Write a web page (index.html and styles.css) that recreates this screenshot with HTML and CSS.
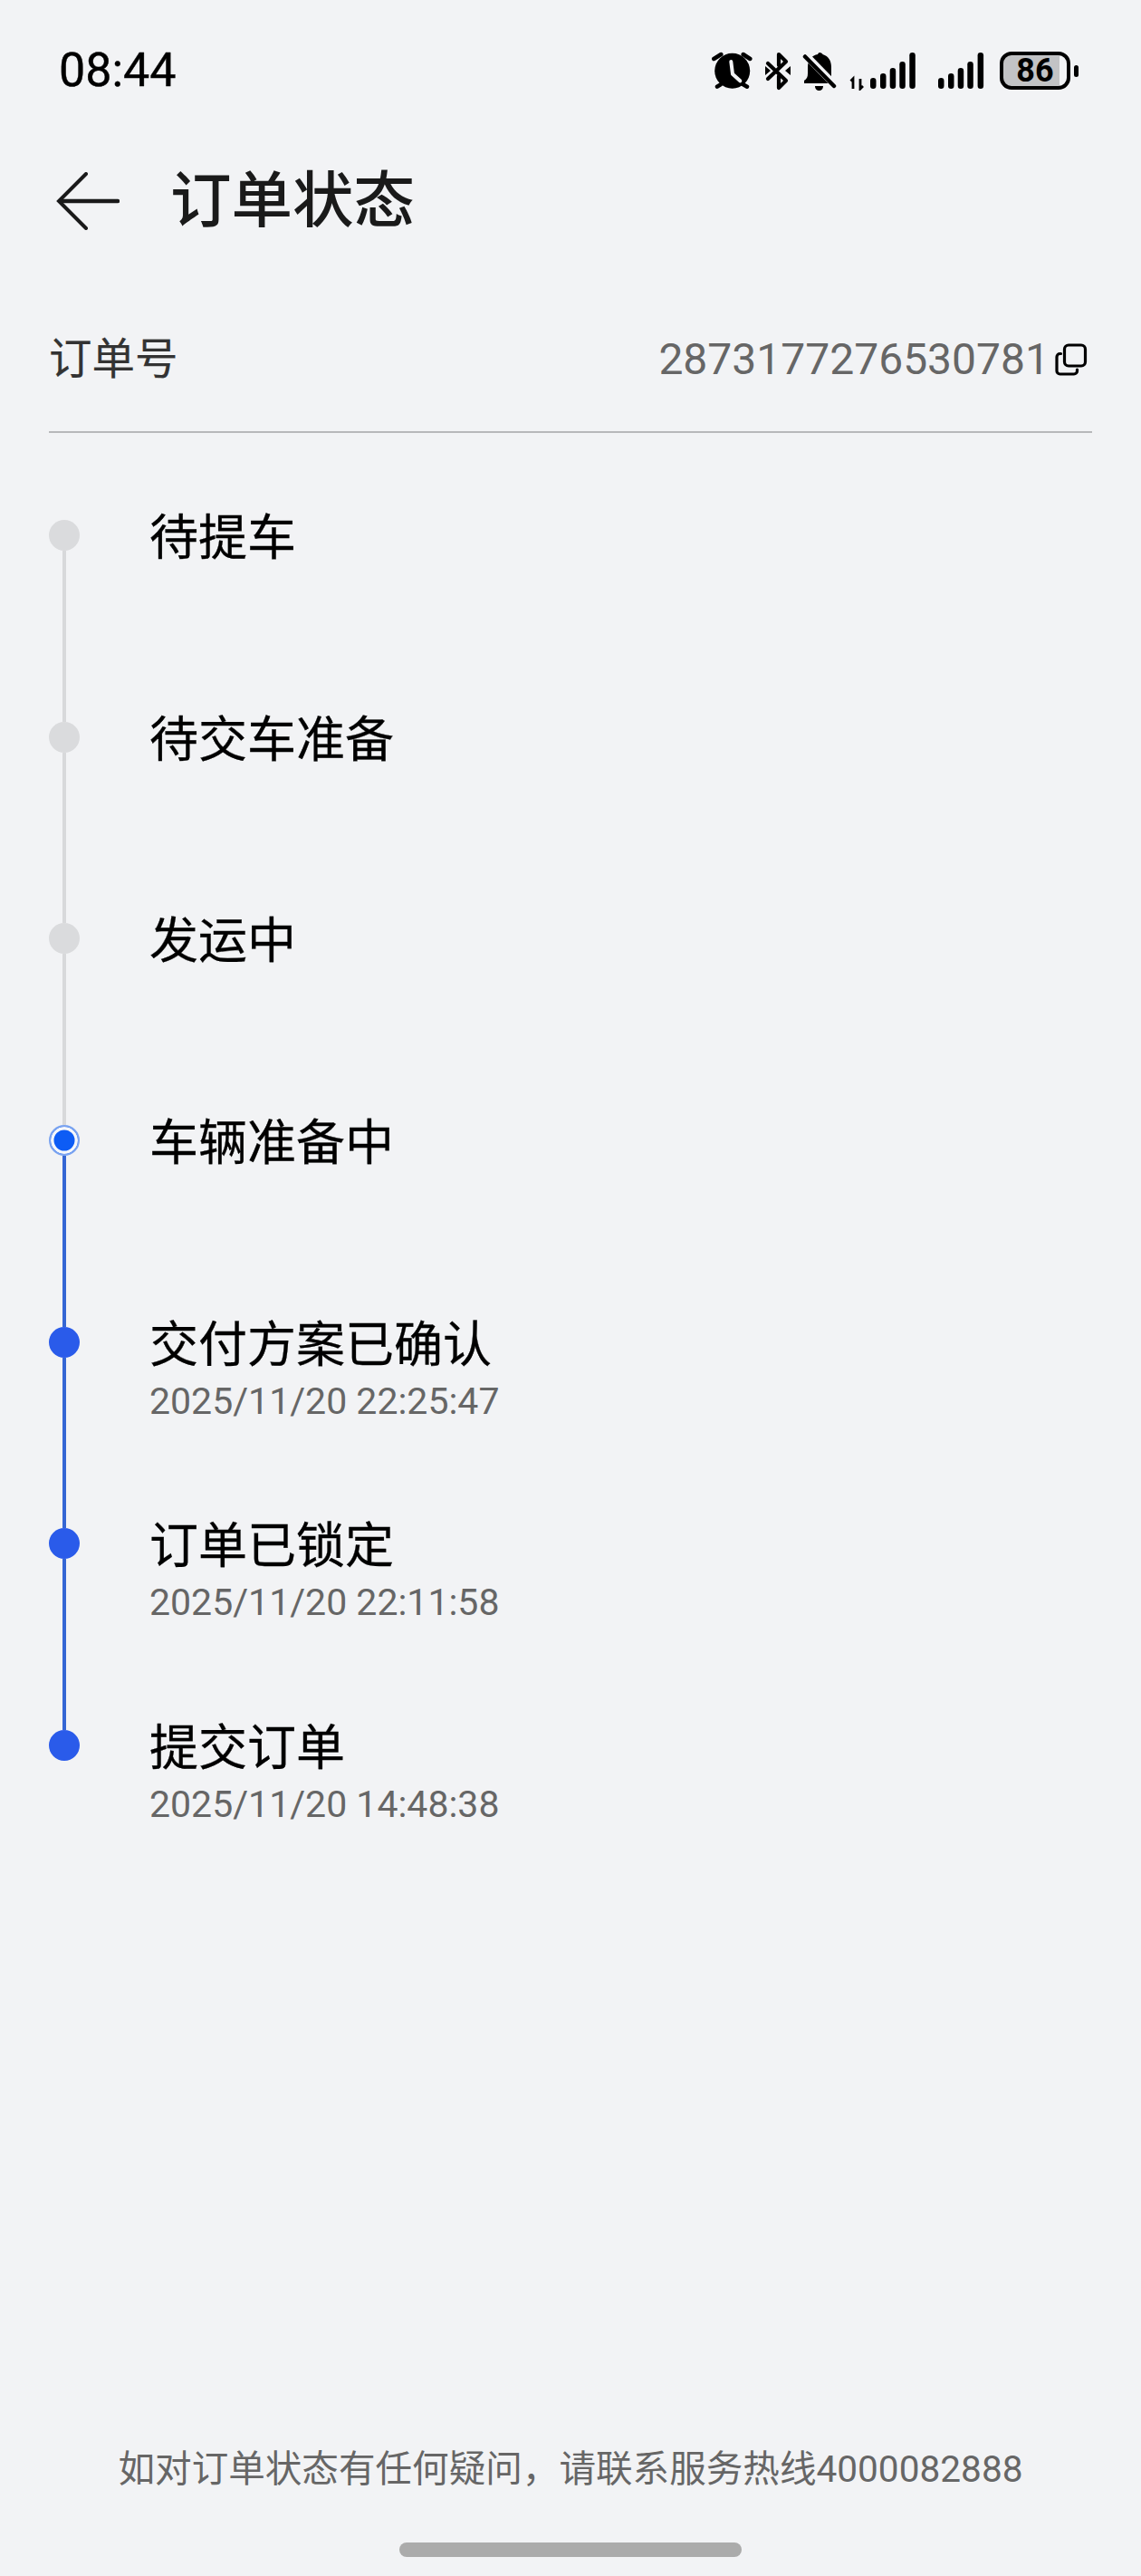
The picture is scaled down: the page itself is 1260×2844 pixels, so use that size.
FILE: index.html
```html
<!DOCTYPE html>
<html lang="zh-CN">
<head>
<meta charset="utf-8">
<title>订单状态</title>
<link rel="stylesheet" href="styles.css">
</head>
<body>
<div class="page">
  <div class="statusbar">
    <span class="time">08:44</span>
    <div class="status-icons">
      <svg class="ic-alarm" width="46" height="44" viewBox="0 0 46 44"><circle cx="23.7" cy="22.3" r="19.5" fill="#000"/><path d="M3.3 9l8-5M35.7 4l7.6 5M7 39.7l3.7-2.4M35.7 37.3l4.3 2.4" stroke="#000" stroke-width="4.5" stroke-linecap="round" fill="none"/><path d="M22.3 12L24 25.7l8.3 7.6" stroke="#f2f3f5" stroke-width="4" stroke-linecap="round" stroke-linejoin="round" fill="none"/></svg>
      <svg class="ic-bt" width="30" height="44" viewBox="0 0 30 44"><path d="M4 14l20 19-8 8V28M16 16V4l8 8L4 31" stroke="#000" stroke-width="4.2" stroke-linejoin="round" stroke-linecap="round" fill="none"/><path d="M1 17l6 5-6 5zM29 17l-6 5 6 5z" fill="#000"/></svg>
      <svg class="ic-bell" width="38" height="44" viewBox="0 0 38 44"><path d="M19 2c2 0 3 1 3.500 2C29 6 32 11 32 18v11l2 4v3H2v-3c3-2 4-4 4-8V18c0-8 5-13 11-14 .5-1 1-2 2-2z" fill="#000"/><path d="M14 39h9c0 3-2 5-4.500 5S14 42 14 39z" fill="#000"/><path d="M1 2l35 36" stroke="#f2f3f5" stroke-width="8" fill="none"/><path d="M3 6.500L35 39" stroke="#000" stroke-width="4.500" stroke-linecap="round" fill="none"/></svg>
      <svg class="ic-sig1" width="74" height="44" viewBox="0 0 74 44"><path d="M4 42V31l-2.500 2.500M12 31v11l3-3" stroke="#000" stroke-width="2.800" fill="none"/><rect x="23" y="30" width="6.500" height="12" rx="3.200"/><rect x="34" y="25" width="6.500" height="17" rx="3.200"/><rect x="44.700" y="19" width="6.500" height="23" rx="3.200"/><rect x="55.300" y="12" width="6.500" height="30" rx="3.200"/><rect x="66.300" y="2" width="6.500" height="40" rx="3.200"/></svg>
      <svg class="ic-sig2" width="52" height="44" viewBox="0 0 52 44"><rect x="1" y="30" width="6.500" height="12" rx="3.200"/><rect x="12" y="25" width="6.500" height="17" rx="3.200"/><rect x="22.700" y="19" width="6.500" height="23" rx="3.200"/><rect x="33.300" y="12" width="6.500" height="30" rx="3.200"/><rect x="44.600" y="2" width="6.500" height="40" rx="3.200"/></svg>
      <div class="battery">86</div>
      <span class="battery-nub"></span>
    </div>
  </div>

  <header class="header">
    <svg class="back" width="70" height="64" viewBox="0 0 70 64"><path d="M33 2L3 32l30 30" fill="none" stroke="#1a1a1a" stroke-width="4" stroke-linecap="round" stroke-linejoin="miter"/><path d="M5 32h63" fill="none" stroke="#1a1a1a" stroke-width="4.500" stroke-linecap="round"/></svg>
    <h1 class="title">订单状态</h1>
  </header>

  <div class="order-row">
    <span class="order-label">订单号</span>
    <div class="order-value">
      <span class="order-no">2873177276530781</span>
      <svg class="copy" width="36" height="36" viewBox="0 0 36 36"><rect x="10.500" y="2" width="23" height="23" rx="4.500" fill="none" stroke="#000" stroke-width="3.200"/><path d="M6.500 11.500H5.500A3.500 3.500 0 0 0 2 15v15.500A3.500 3.500 0 0 0 5.500 34H21a3.500 3.500 0 0 0 3.500-3.500v-1.500" fill="none" stroke="#000" stroke-width="3.200" stroke-linecap="round"/></svg>
    </div>
  </div>

  <ol class="timeline">
    <li class="step"><div class="rail"><span class="dot dot-todo"></span><span class="line line-todo"></span></div><div class="step-text"><div class="step-name">待提车</div></div></li>
    <li class="step"><div class="rail"><span class="dot dot-todo"></span><span class="line line-todo"></span></div><div class="step-text"><div class="step-name">待交车准备</div></div></li>
    <li class="step"><div class="rail"><span class="dot dot-todo"></span><span class="line line-todo"></span></div><div class="step-text"><div class="step-name">发运中</div></div></li>
    <li class="step"><div class="rail"><span class="dot dot-now"></span><span class="line line-done"></span></div><div class="step-text"><div class="step-name">车辆准备中</div></div></li>
    <li class="step"><div class="rail"><span class="dot dot-done"></span><span class="line line-done"></span></div><div class="step-text"><div class="step-name">交付方案已确认</div><div class="step-date">2025/11/20 22:25:47</div></div></li>
    <li class="step"><div class="rail"><span class="dot dot-done"></span><span class="line line-done"></span></div><div class="step-text"><div class="step-name">订单已锁定</div><div class="step-date">2025/11/20 22:11:58</div></div></li>
    <li class="step"><div class="rail"><span class="dot dot-done"></span></div><div class="step-text"><div class="step-name">提交订单</div><div class="step-date">2025/11/20 14:48:38</div></div></li>
  </ol>

  <footer class="footer">
    <p class="hotline">如对订单状态有任何疑问，请联系服务热线4000082888</p>
    <span class="home-bar"></span>
  </footer>
</div>
</body>
</html>
```
FILE: styles.css
```css
* { box-sizing: border-box; }
html, body { margin: 0; padding: 0; }
body {
  background: #f2f3f5;
  font-family: Roboto, "Noto Sans CJK SC", sans-serif;
  color: #000;
}
.page {
  width: 1260px;
  height: 2844px;
  display: flex;
  flex-direction: column;
  overflow: hidden;
}
.statusbar {
  height: 152px;
  padding: 4px 69px 0 65px;
  display: flex;
  align-items: center;
  justify-content: space-between;
}
.time {
  font-size: 52px;
  font-weight: 400;
  -webkit-text-stroke: 0.4px #000;
  line-height: 1;
}
.status-icons { display: flex; align-items: center; }
.status-icons svg { display: block; }
.ic-bt { margin-left: 13px; }
.ic-bell { margin-left: 12px; }
.ic-sig1 { margin-left: 14px; }
.ic-sig2 { margin-left: 23px; }
.battery {
  width: 78px;
  height: 42px;
  margin-left: 17px;
  border: 4px solid #000;
  border-radius: 13px;
  background: linear-gradient(to right, #c2c3c5 0 88%, #f2f3f5 88%);
  font-size: 36px;
  font-weight: 700;
  line-height: 34px;
  text-align: center;
}
.battery-nub {
  width: 5px;
  height: 13px;
  margin-left: 4px;
  background: #000;
  border-radius: 3px;
}
.header {
  height: 140px;
  padding-left: 62px;
  display: flex;
  align-items: center;
}
.back { display: block; }
.title {
  margin: 0 0 0 56px;
  font-size: 67.5px;
  line-height: 80px;
  font-weight: 500;
  color: #1a1a1a;
}
.order-row {
  height: 186px;
  margin: 0 54px;
  padding-top: 75px;
  border-bottom: 2px solid #b7b8ba;
  display: flex;
  align-items: flex-start;
  justify-content: space-between;
}
.order-label {
  font-size: 47.5px;
  line-height: 60px;
  color: #333;
  -webkit-text-stroke: 0.2px #333;
}
.order-value { display: flex; align-items: center; padding-right: 5px; }
.order-no {
  font-size: 48px;
  line-height: 60px;
  color: #666;
}
.copy { display: block; margin-left: 6px; }
.timeline {
  list-style: none;
  margin: 96px 0 0;
  padding: 0 0 0 54px;
}
.step {
  height: 222.67px;
  display: flex;
}
.rail {
  width: 34px;
  display: flex;
  flex-direction: column;
  align-items: center;
}
.dot {
  width: 34px;
  height: 34px;
  flex: none;
  border-radius: 50%;
}
.dot-todo { background: #dadbdd; }
.dot-done { background: #2a5bea; }
.dot-now {
  background: #0d5cf5;
  border: 2.5px solid #7aa3f0;
  box-shadow: inset 0 0 0 3.5px #f5f7fb;
}
.line { width: 4px; flex: 1; }
.line-todo { background: #d8d9db; }
.line-done { background: #3566d4; }
.step-text { margin-left: 77px; margin-top: -13px; }
.step-name {
  font-size: 54px;
  line-height: 68px;
  color: #000;
  -webkit-text-stroke: 0.3px #000;
}
.step-date {
  font-size: 41px;
  line-height: 50px;
  margin-top: 2px;
  color: #666;
}
.footer {
  margin-top: auto;
  padding-bottom: 21px;
  display: flex;
  flex-direction: column;
  align-items: center;
}
.hotline {
  margin: 0;
  font-size: 40.6px;
  line-height: 50px;
  color: #666;
}
.home-bar {
  width: 378px;
  height: 16px;
  margin-top: 56px;
  border-radius: 8px;
  background: #ababab;
}
```
